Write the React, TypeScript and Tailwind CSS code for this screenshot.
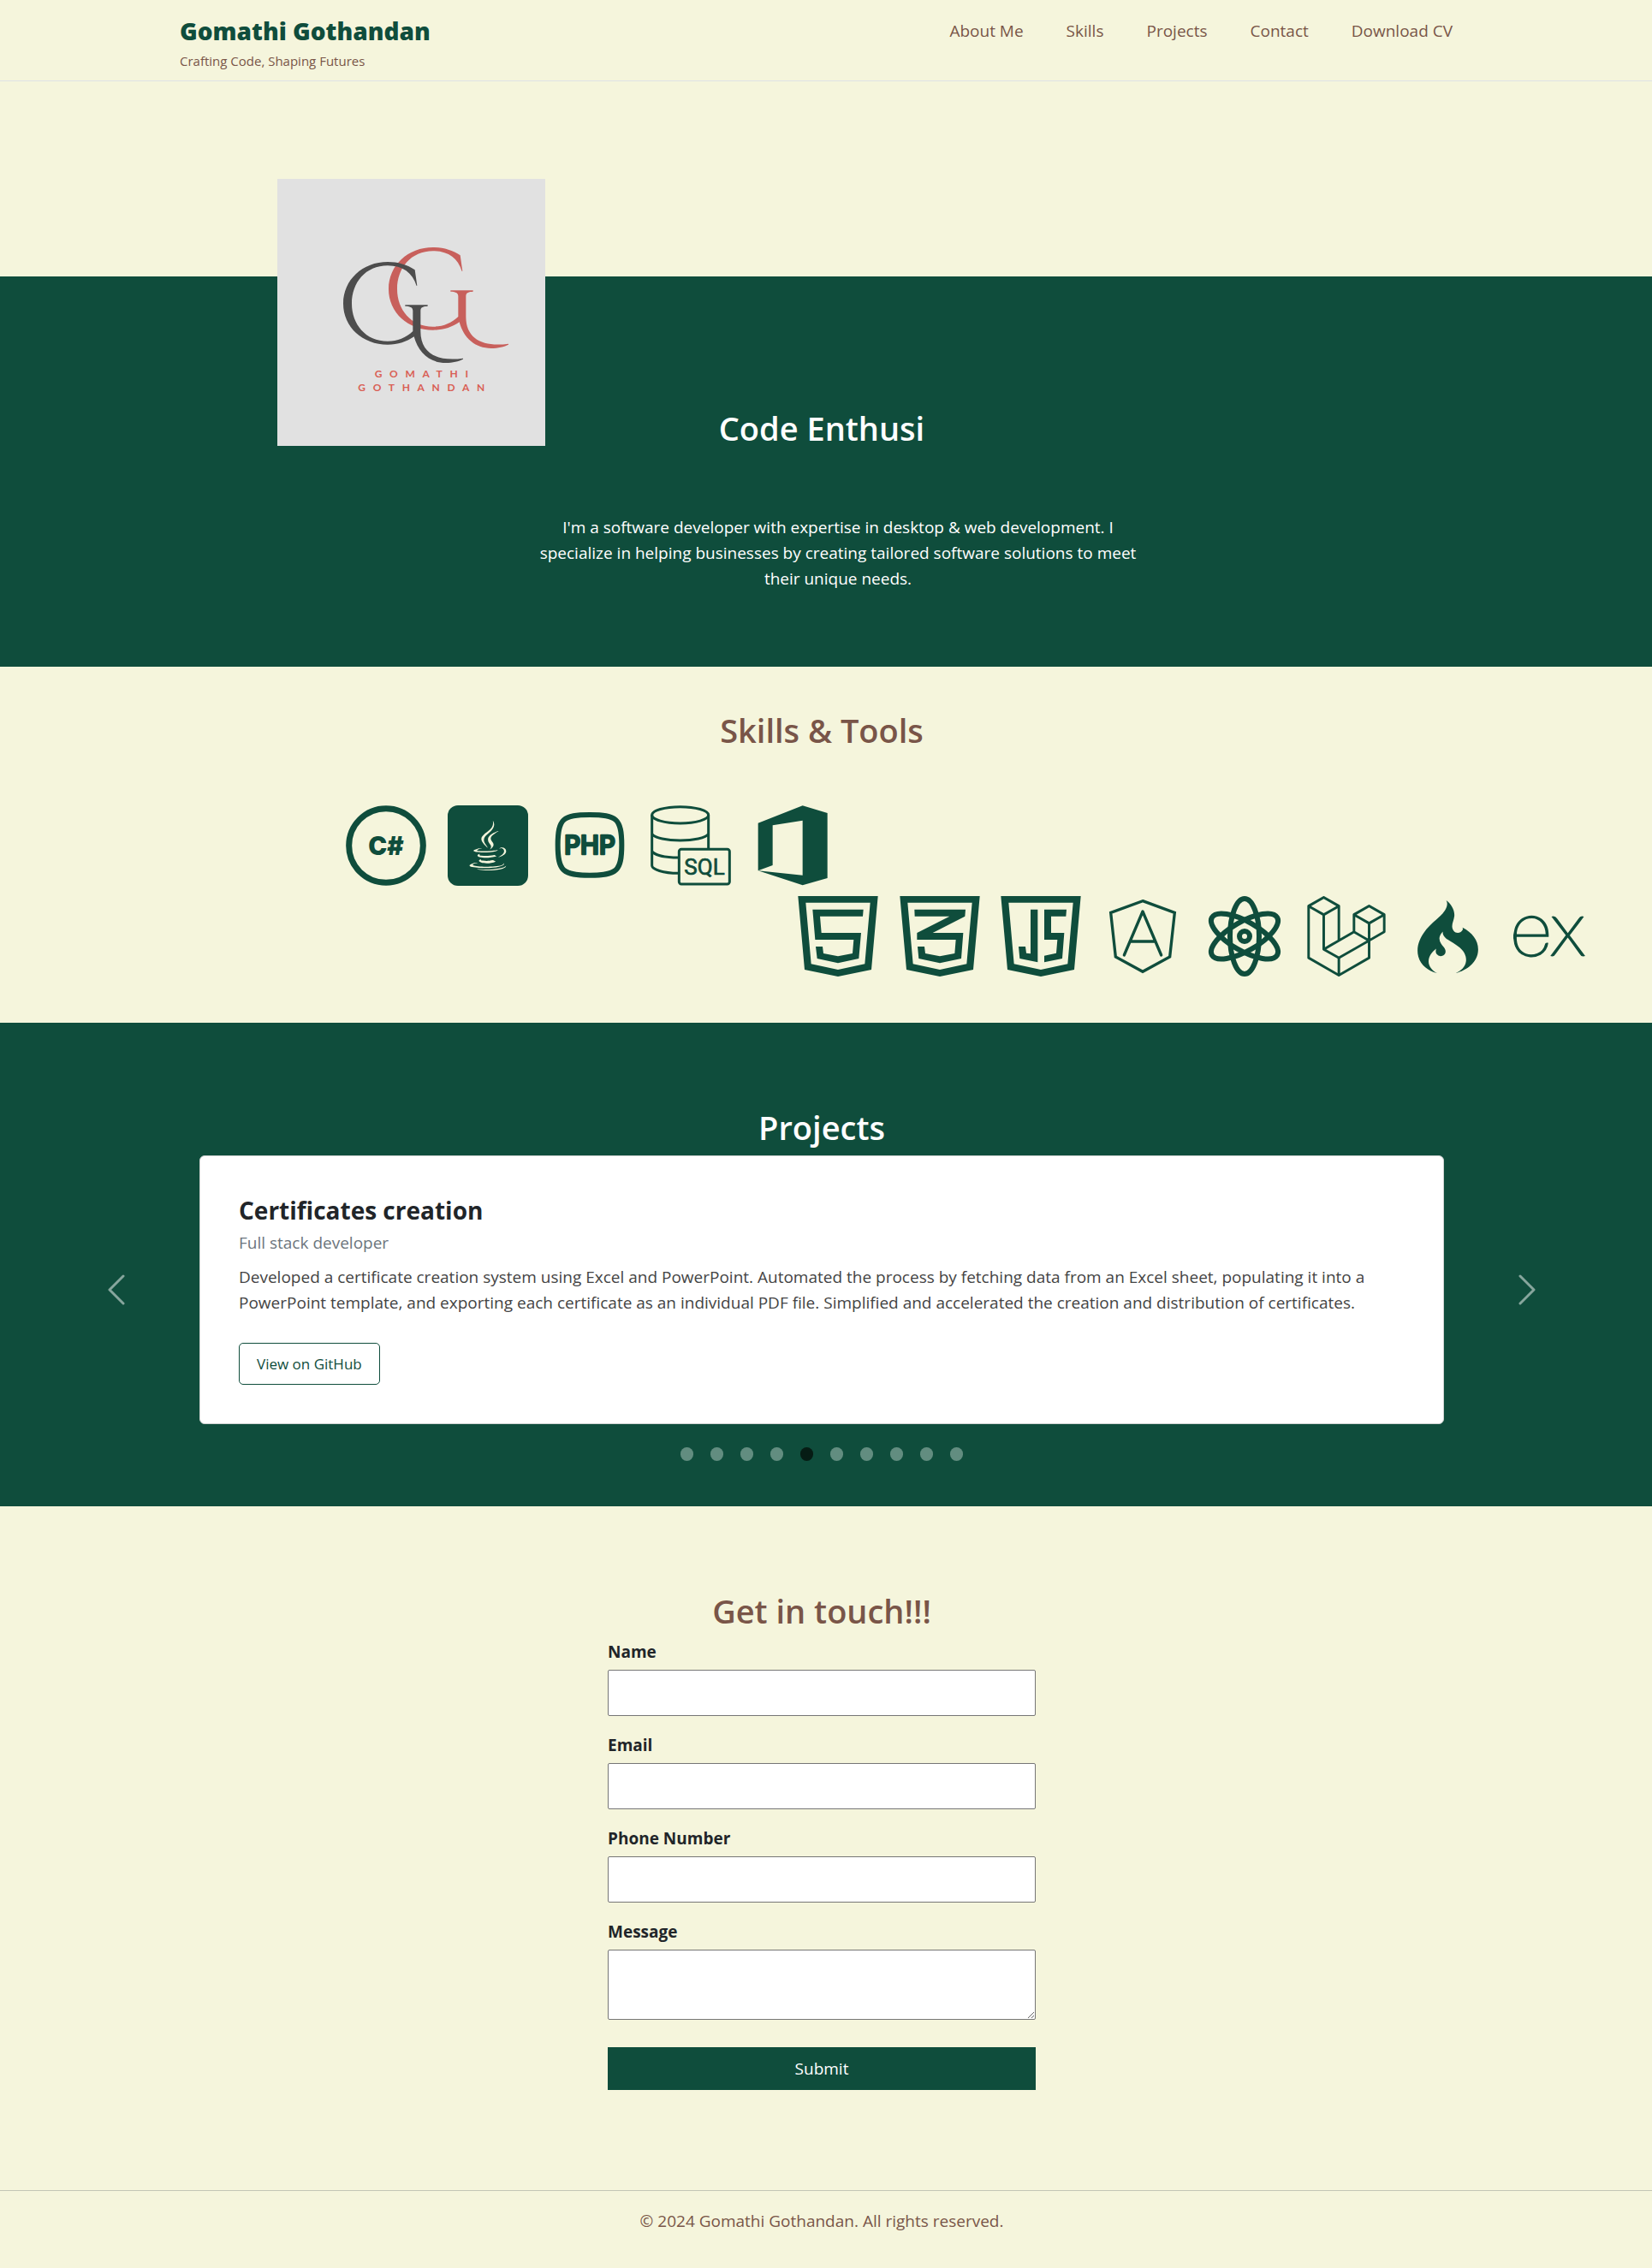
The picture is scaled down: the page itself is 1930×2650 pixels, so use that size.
import type { ReactNode } from "react";
import { FaJava } from "react-icons/fa";
import { SiCodeigniter, SiExpress, SiLaravel } from "react-icons/si";

const navLinks = ["About Me", "Skills", "Projects", "Contact", "Download CV"];

function Heading({ children }: { children: ReactNode }) {
  return <h2 className="text-center text-[38px] leading-[48px] font-semibold">{children}</h2>;
}

function Monogram() {
  const g =
    "M523 360C497 342 463 332 428 332C340 332 272 395 272 478C272 560 340 622 428 622C463 622 495 612 520 594C535 650 575 686 632 686C655 686 678 680 692 673L692 670C605 682 543 655 543 575L543 503C543 490 553 488 568 487L568 483L489 483L489 487C505 488 516 490 516 503L516 575C492 598 462 610 428 610C350 610 302 550 302 478C302 405 350 345 428 345C480 345 515 370 529 416L531 415Z";
  return (
    <svg viewBox="41 41 939 936" className="relative z-10 h-[312px] w-[313px] bg-[#e1e1e1]" role="img" aria-label="Gomathi Gothandan logo">
      <path d={g} fill="#c8605c" transform="translate(159 -51)" />
      <path d={g} fill="#4d4d4d" />
      <g className="font-['Lato'] text-[36px] font-bold tracking-[26px]" fill="#d95f55" textAnchor="middle">
        <text x="559" y="738">GOMATHI</text>
        <text x="559" y="786">GOTHANDAN</text>
      </g>
    </svg>
  );
}

function CSharpIcon() {
  return (
    <svg viewBox="42 61 282 282" className="size-[94px]" role="img" aria-label="C#">
      <circle cx="183" cy="202" r="130" fill="none" stroke="#0f4d3c" strokeWidth="21" />
      <text x="183" y="235" textAnchor="middle" fill="#0f4d3c" className="font-['Inter'] text-[88px] font-black">C#</text>
    </svg>
  );
}

function JavaIcon() {
  return (
    <div className="flex size-[94px] items-center justify-center rounded-[12px] bg-[#0f4d3c] text-[#f5f5dc]">
      <FaJava size={58} title="Java" />
    </div>
  );
}

function PhpIcon() {
  return (
    <svg viewBox="755 61 282 282" className="size-[94px]" role="img" aria-label="PHP">
      <path
        d="M896 94C990 94 1008 108 1008 200C1008 292 990 306 896 306C802 306 784 292 784 200C784 108 802 94 896 94Z"
        fill="none"
        stroke="#0f4d3c"
        strokeWidth="18"
      />
      <text x="896" y="231" textAnchor="middle" fill="#0f4d3c" stroke="#0f4d3c" strokeWidth="8" strokeLinejoin="round" className="font-['Inter'] text-[88px] font-medium">
        PHP
      </text>
    </svg>
  );
}

function SqlIcon() {
  return (
    <svg viewBox="211 61 282 282" className="size-[94px]" role="img" aria-label="SQL" fill="none" stroke="#0f4d3c" strokeWidth="9">
      <ellipse cx="315" cy="95" rx="99" ry="29" />
      <path d="M216 95V272C216 285 255 299 308 299M414 95V212M216 161C225 176 270 184 315 184S405 176 414 161M216 222C225 235 260 244 308 244" />
      <rect x="311" y="215" width="177" height="122" rx="8" />
      <text x="400" y="305" textAnchor="middle" fill="#0f4d3c" strokeWidth="2" className="font-['Roboto'] text-[78px]">SQL</text>
    </svg>
  );
}

function OfficeIcon() {
  return (
    <svg viewBox="567 61 282 282" className="size-[94px]" role="img" aria-label="Office" fill="#0f4d3c">
      <path d="M743 62L830 88V316L743 341L587 290L743 306V114L638 131V271L587 290V123Z" />
    </svg>
  );
}

const shield = "M37 50H317L294 308L177 332L60 308ZM64 73L83 288L177 308L271 288L290 73Z";

function HtmlIcon() {
  return (
    <svg viewBox="36 50 282 282" className="size-[94px]" role="img" aria-label="HTML5" fill="#0f4d3c">
      <path fillRule="evenodd" d={shield} />
      <path d="M88 97H266L264 121H114L119 179H258L250 269L177 285L104 269L99 227H123L126 251L177 261L228 251L232 203H97Z" />
    </svg>
  );
}

function CssIcon() {
  return (
    <svg viewBox="36 50 282 282" className="size-[94px]" role="img" aria-label="CSS3" fill="#0f4d3c">
      <path fillRule="evenodd" d={shield} />
      <path d="M88 97H267L265 121L152 179H259L252 269L177 285L103 269L99 227H123L126 251L177 261L229 251L233 203H97V179L211 121H89Z" />
    </svg>
  );
}

function JsIcon() {
  return (
    <svg viewBox="36 50 282 282" className="size-[94px]" role="img" aria-label="JavaScript" fill="#0f4d3c">
      <path fillRule="evenodd" d={shield} />
      <path d="M141 97H166V282L103 269L99 227H123L126 250L141 252ZM189 97H267L265 121H213V179H259L252 269L189 282V259L231 250L235 203H189Z" />
    </svg>
  );
}

function AngularIcon() {
  return (
    <svg viewBox="1105 50 282 282" className="size-[94px]" role="img" aria-label="Angular" fill="none" stroke="#0f4d3c" strokeWidth="10">
      <path d="M1246 67L1358 108L1341 263L1246 315L1151 263L1134 108Z" />
      <path d="M1181 257L1246 104L1311 257M1203 209H1289" strokeLinecap="round" strokeLinejoin="round" />
    </svg>
  );
}

function ReactIcon() {
  return (
    <svg viewBox="0 0 94 94" className="size-[94px]" role="img" aria-label="React" fill="none" stroke="#0f4d3c" strokeWidth="6">
      <ellipse cx="47" cy="47" rx="17" ry="44" />
      <ellipse cx="47" cy="47" rx="17" ry="44" transform="rotate(60 47 47)" />
      <ellipse cx="47" cy="47" rx="17" ry="44" transform="rotate(-60 47 47)" />
      <circle cx="47" cy="47" r="6" />
    </svg>
  );
}

function Boxed({ children }: { children: ReactNode }) {
  return <div className="flex size-[94px] items-center justify-center">{children}</div>;
}

function Chevron({ flip }: { flip?: boolean }) {
  return (
    <svg viewBox="0 0 20 36" className="h-9 w-5" fill="none" stroke="#87a69d" strokeWidth="3" strokeLinecap="round" strokeLinejoin="round" aria-hidden="true">
      <path d={flip ? "M2 2L18 18L2 34" : "M18 2L2 18L18 34"} />
    </svg>
  );
}

function Field({ id, label, type }: { id: string; label: string; type: string }) {
  return (
    <div className="flex flex-col gap-1.5">
      <label htmlFor={id} className="font-bold">{label}</label>
      <input id={id} type={type} className="h-[54px] rounded-[2px] border border-[#767676] bg-white px-3" />
    </div>
  );
}

export default function App() {
  return (
    <div className="min-h-screen bg-[#f5f5dc] font-['Open_Sans','Noto_Sans',sans-serif] text-[19px] leading-[30px] text-[#212529]">
      <header className="border-b border-[#dee2e6] pr-[10px]">
        <div className="mx-auto flex max-w-[1500px] justify-between pt-4 pb-2">
          <div>
            <h1 className="text-[28px] leading-10 font-extrabold text-[#0f4d3c]">Gomathi Gothandan</h1>
            <p className="text-[15px] text-[#795548]">Crafting Code, Shaping Futures</p>
          </div>
          <nav className="flex gap-[50px] pt-[5px] pr-[13px] text-[#795548]">
            {navLinks.map((link) => (
              <a key={link} href="#" className="h-fit">{link}</a>
            ))}
          </nav>
        </div>
      </header>

      <main>
        <div className="h-[228px] pt-[114px] pr-[10px]">
          <div className="mx-auto max-w-[1500px] pl-[114px]">
            <Monogram />
          </div>
        </div>
        <section className="bg-[#0f4d3c] pt-[153px] pr-[10px] pb-[88px] text-white">
          <Heading>Code Enthusi</Heading>
          <div className="mt-[77px] pl-[38px]">
            <p className="mx-auto max-w-[710px] text-center">
              I'm a software developer with expertise in desktop &amp; web development. I specialize in helping businesses
              by creating tailored software solutions to meet their unique needs.
            </p>
          </div>
        </section>

        <section className="overflow-hidden pt-[50px] pr-[10px] pb-[54px]">
          <div className="text-[#795548]">
            <Heading>Skills &amp; Tools</Heading>
          </div>
          <div className="mx-auto mt-16 flex max-w-[1500px] flex-col gap-3 text-[#0f4d3c]">
            <div className="ml-[194px] flex w-[569px] justify-between">
              <CSharpIcon />
              <JavaIcon />
              <PhpIcon />
              <SqlIcon />
              <OfficeIcon />
            </div>
            <div className="ml-[722px] flex w-[925px] shrink-0 justify-between">
              <HtmlIcon />
              <CssIcon />
              <JsIcon />
              <AngularIcon />
              <ReactIcon />
              <SiLaravel size={94} title="Laravel" />
              <Boxed><SiCodeigniter size={85} title="CodeIgniter" /></Boxed>
              <Boxed><SiExpress size={84} title="Express" /></Boxed>
            </div>
          </div>
        </section>

        <section className="bg-[#0f4d3c] pt-[98px] pr-[10px] pb-[53px]">
          <div className="text-white">
            <Heading>Projects</Heading>
          </div>
          <div className="mt-[9px] flex items-center gap-[57px] px-24">
            <button type="button" aria-label="Previous project" className="flex h-20 w-20 items-center justify-center">
              <Chevron />
            </button>
            <article className="flex-1 rounded-md border border-[#cfd3d2] bg-white px-[45px] pt-[45px] pb-[45px]">
              <h3 className="text-[28px] leading-9 font-bold">Certificates creation</h3>
              <p className="mt-[5px] text-[#6c757d]">Full stack developer</p>
              <p className="mt-2.5 text-[#444444]">
                Developed a certificate creation system using Excel and PowerPoint. Automated the process by fetching data
                from an Excel sheet, populating it into a PowerPoint template, and exporting each certificate as an
                individual PDF file. Simplified and accelerated the creation and distribution of certificates.
              </p>
              <a href="#" className="mt-8 flex h-[49px] w-fit items-center rounded-[5px] border border-[#0f4d3c] px-5 text-[17px] text-[#0f4d3c]">
                View on GitHub
              </a>
            </article>
            <button type="button" aria-label="Next project" className="flex h-20 w-20 items-center justify-center">
              <Chevron flip />
            </button>
          </div>
          <div className="mt-[27px] flex justify-center gap-5">
            {Array.from({ length: 10 }, (_, i) => (
              <button
                key={i}
                type="button"
                aria-label={`Project ${i + 1}`}
                className={i === 4 ? "h-4 w-[15px] rounded-full bg-[#061c14]" : "h-4 w-[15px] rounded-full bg-[#628d80]"}
              />
            ))}
          </div>
        </section>

        <section className="pt-[98px] pr-[10px] pb-[117px]">
          <div className="text-[#795548]">
            <Heading>Get in touch!!!</Heading>
          </div>
          <form className="mx-auto mt-[9px] flex max-w-[500px] flex-col gap-[19px]">
            <Field id="name" label="Name" type="text" />
            <Field id="email" label="Email" type="email" />
            <Field id="phone" label="Phone Number" type="tel" />
            <div className="flex flex-col gap-1.5">
              <label htmlFor="message" className="font-bold">Message</label>
              <textarea id="message" className="h-[82px] resize rounded-[2px] border border-[#767676] bg-white px-3" />
            </div>
            <button type="submit" className="mt-[13px] h-[50px] bg-[#0f4d3c] text-white">Submit</button>
          </form>
        </section>
      </main>

      <footer className="border-t border-[#c3c5b5] pt-5 pr-[10px] pb-10 text-center text-[#795548]">
        <p>© 2024 Gomathi Gothandan. All rights reserved.</p>
      </footer>
    </div>
  );
}
